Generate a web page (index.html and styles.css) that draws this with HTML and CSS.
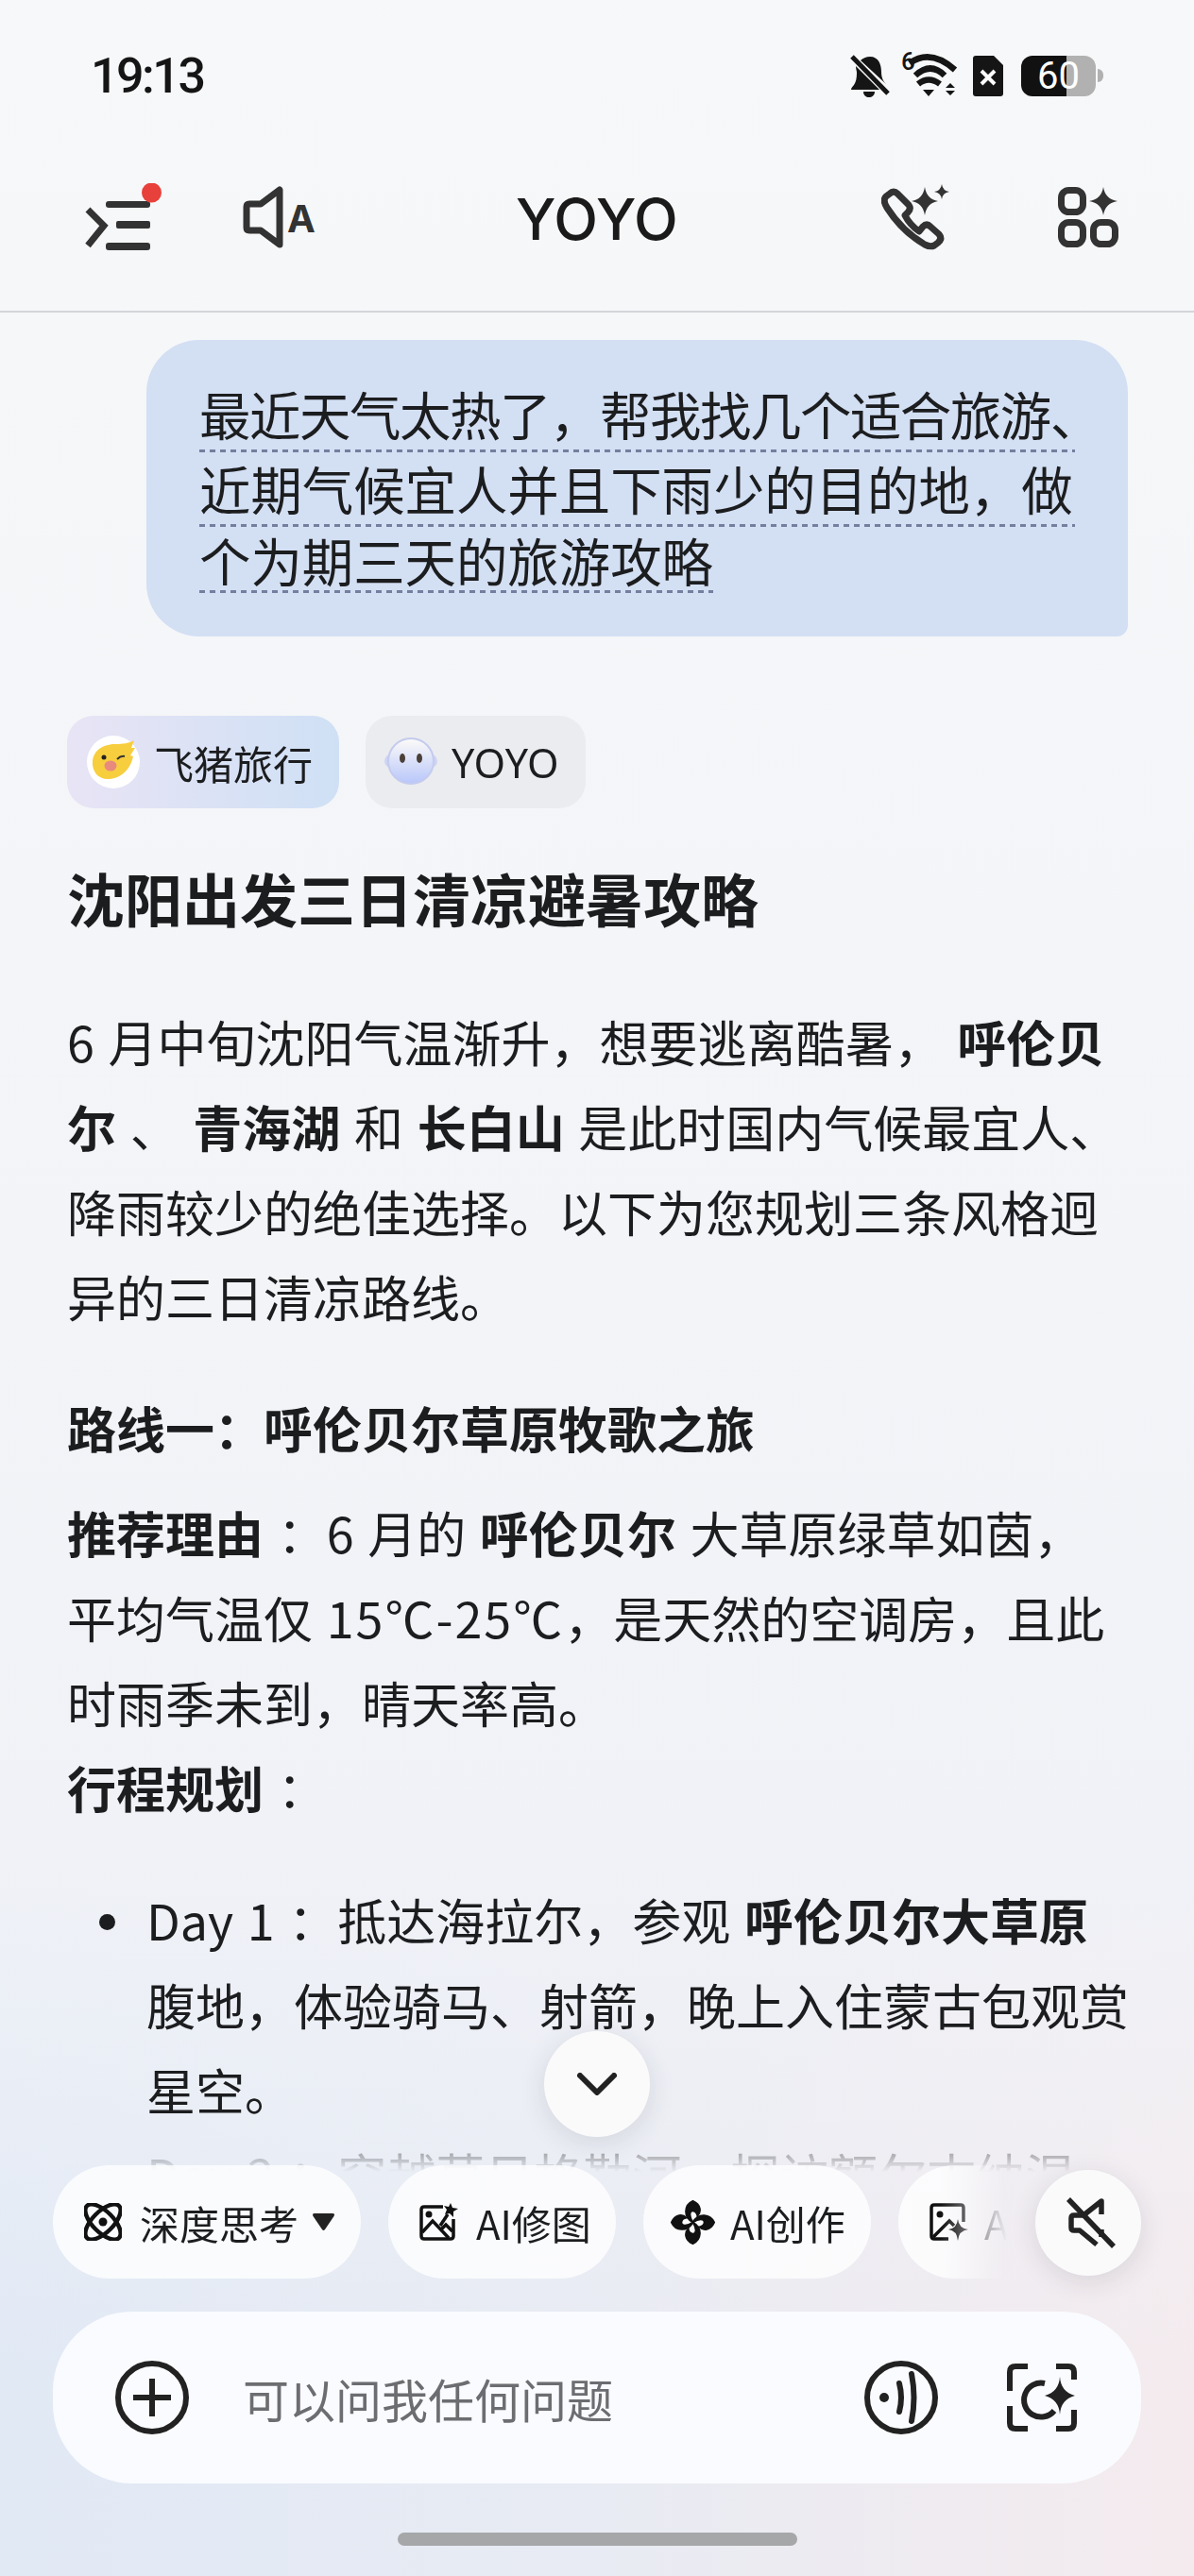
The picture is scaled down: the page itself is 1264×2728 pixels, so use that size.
FILE: index.html
```html
<!DOCTYPE html>
<html lang="zh-CN">

<head>
    <meta charset="utf-8">
    <title>YOYO</title>
    <link rel="stylesheet" href="styles.css">
</head>

<body>
    <div class="screen">

        <header class="top">
            <div class="status">
                <span class="time">19:13</span>
                <div class="status-icons">
                    <svg class="st-bell" width="44" height="46" viewBox="0 0 44 46">
                        <path d="M22 3 C31 3 34 11 34 19 C34 25 36 29 39 32 L12 7 C14 5 18 3 22 3Z M7 13 L32 38 H2 C2 36 4 34 5 33 C7 30 8 26 8 20 C8 18 7 16 7 13Z M15 40 H27 C27 44 24 46 21 46 C18 46 15 44 15 40Z" fill="#151515"/>
                        <path d="M3 3 L41 42" stroke="#151515" stroke-width="5"/>
                    </svg>
                    <svg class="st-wifi" width="60" height="54" viewBox="0 -6 60 54">
                        <text x="0" y="18" class="wifi-six">6</text>
                        <path d="M9 11 Q31 -5 57 18 M15 24 Q31 9 46 24 M18 33 Q29 24 41 33" fill="none" stroke="#151515" stroke-width="6.500"/>
                        <path d="M23 39 H35 L29 46Z M47 37 L52 32 L57 37Z M47 40 H57 L52 45Z" fill="#151515"/>
                    </svg>
                    <svg class="st-sim" width="32" height="43" viewBox="0 0 32 43">
                        <path d="M3 0 H22 L32 10 V40 Q32 43 29 43 H3 Q0 43 0 40 V3 Q0 0 3 0Z" fill="#151515"/>
                        <path d="M9 16 L23 30 M23 16 L9 30" stroke="#fff" stroke-width="4"/>
                    </svg>
                    <div class="battery">60</div>
                </div>
            </div>
            <nav class="nav">
                <div class="nav-left">
                    <svg width="82" height="72" viewBox="0 0 82 72">
                        <rect x="22" y="19" width="47" height="7" rx="3" fill="#333"/>
                        <rect x="33" y="40" width="36" height="8" rx="2" fill="#333"/>
                        <rect x="22" y="63" width="47" height="8" rx="3" fill="#333"/>
                        <path d="M3 28 L20 45 L3 66" fill="none" stroke="#333" stroke-width="7"/>
                        <circle cx="70.5" cy="10" r="10.5" fill="#e8403a"/>
                    </svg>
                    <svg width="80" height="66" viewBox="0 0 80 66">
                        <path d="M7 19 H19 L39 4 V62 L19 47 H7 Q4 47 4 44 V22 Q4 19 7 19Z" fill="none" stroke="#333" stroke-width="7" stroke-linejoin="round"/>
                        <text x="47" y="49" class="speaker-a">A</text>
                    </svg>
                </div>
                <div class="nav-title">YOYO</div>
                <div class="nav-right">
                    <svg width="74" height="70" viewBox="0 0 74 70">
                        <path d="M9 10 Q13 6 17 10 L29 22 Q32 26 28 30 L25 33 Q30 43 40 50 L44 45 Q48 41 52 45 L61 53 Q65 58 60 62 L56 65 Q52 67 46 64 Q22 50 6 25 Q1 17 5 13Z" fill="none" stroke="#333" stroke-width="7" stroke-linejoin="round"/>
                        <path d="M46 3 Q48 16 60 18 Q48 20 46 33 Q44 20 32 18 Q44 16 46 3Z M64 0 Q65 7 72 8 Q65 9 64 16 Q63 9 56 8 Q63 7 64 0Z" fill="#333"/>
                    </svg>
                    <svg width="64" height="64" viewBox="0 0 64 64">
                        <g fill="none" stroke="#333" stroke-width="7">
                            <rect x="3.500" y="3.500" width="23" height="23" rx="8"/>
                            <rect x="3.500" y="37.500" width="23" height="23" rx="8"/>
                            <rect x="37.500" y="37.500" width="23" height="23" rx="8"/>
                        </g>
                        <path d="M48 0 Q50 13 63 15 Q50 17 48 30 Q46 17 33 15 Q46 13 48 0Z" fill="#333"/>
                    </svg>
                </div>
            </nav>
        </header>

        <main class="chat">
            <div class="bubble">
                <span class="asked asked-first">最近天气太热了&#xFF0C;帮我找几个适合旅游、</span>
                <span class="asked">近期气候宜人并且下雨少的目的地&#xFF0C;做</span>
                <span class="asked asked-last">个为期三天的旅游攻略</span>
            </div>

            <div class="tags">
                <div class="tag tag-trip">
                    <svg width="56" height="56" viewBox="0 0 56 56">
                        <circle cx="28" cy="28" r="28" fill="#fff"/>
                        <path d="M6 27 C7 15 18 9 30 9 C38 9 45 8 50 5 L47 13 L51 13 L46 21 L49 22 C46 36 36 46 22 46 C12 46 5 38 6 27Z" fill="#f7ce3e"/>
                        <circle cx="18" cy="23" r="2.5" fill="#222"/>
                        <path d="M32 25 Q36 21 40 22" fill="none" stroke="#333" stroke-width="2"/>
                        <ellipse cx="25" cy="32" rx="6.5" ry="5.5" fill="#e98a7f"/>
                    </svg>
                    <span>飞猪旅行</span>
                </div>
                <div class="tag tag-yoyo">
                    <svg width="56" height="56" viewBox="0 0 56 56">
                        <defs>
                            <linearGradient id="yoyoFace" x1="0" y1="0" x2="0" y2="1">
                                <stop offset="0" stop-color="#fdfbf8"/>
                                <stop offset="1" stop-color="#b8c6fa"/>
                            </linearGradient>
                        </defs>
                        <ellipse cx="28" cy="27" rx="28" ry="13" fill="#cdd4f5"/>
                        <circle cx="28" cy="27" r="24" fill="url(#yoyoFace)" stroke="#c4cbee" stroke-width="2"/>
                        <ellipse cx="19" cy="24" rx="3" ry="5" fill="#4a4038"/>
                        <ellipse cx="37" cy="24" rx="3" ry="5" fill="#4a4038"/>
                    </svg>
                    <span>YOYO</span>
                </div>
            </div>

            <h1>沈阳出发三日清凉避暑攻略</h1>

            <p class="intro">6 月中旬沈阳气温渐升&#xFF0C;想要逃离酷暑&#xFF0C; <b>呼伦贝</b><br><b>尔</b> 、 <b>青海湖</b> 和 <b>长白山</b> 是此时国内气候最宜人、<br>降雨较少的绝佳选择。以下为您规划三条风格迥<br>异的三日清凉路线。</p>

            <h3>路线一&#xFF1A;呼伦贝尔草原牧歌之旅</h3>

            <p class="route"><b>推荐理由</b> &#xFF1A;6 月的 <b>呼伦贝尔</b> 大草原绿草如茵&#xFF0C;<br>平均气温仅 <span class="temp">15℃-25℃</span>&#xFF0C;是天然的空调房&#xFF0C;且此<br>时雨季未到&#xFF0C;晴天率高。<br><b>行程规划</b> &#xFF1A;</p>

            <ul>
                <li>Day 1 &#xFF1A;抵达海拉尔&#xFF0C;参观 <b>呼伦贝尔大草原</b><br>腹地&#xFF0C;体验骑马、射箭&#xFF0C;晚上入住蒙古包观赏<br>星空。</li>
                <li>Day 2 &#xFF1A;穿越莫日格勒河&#xFF0C;探访额尔古纳湿地。</li>
            </ul>
        </main>

        <button class="round round-down">
            <svg width="42" height="24" viewBox="0 0 42 24">
                <path d="M3 3 L21 21 L39 3" fill="none" stroke="#222" stroke-width="6" stroke-linecap="round" stroke-linejoin="round"/>
            </svg>
        </button>

        <footer class="dock">
            <div class="chips">
                <div class="chip chip-think">
                    <svg width="40" height="40" viewBox="0 0 40 40">
                        <g fill="none" stroke="#111" stroke-width="4.500">
                            <ellipse cx="20" cy="20" rx="24" ry="11" transform="rotate(45 20 20)"/>
                            <ellipse cx="20" cy="20" rx="24" ry="11" transform="rotate(-45 20 20)"/>
                        </g>
                        <circle cx="20" cy="20" r="4.5" fill="#111"/>
                    </svg>
                    <span>深度思考</span>
                    <svg class="caret" width="25" height="20" viewBox="0 0 25 20">
                        <path d="M3 1 H22 Q25 1 23.500 4 L14 18 Q12.500 20 11 18 L1.500 4 Q0 1 3 1Z" fill="#222"/>
                    </svg>
                </div>
                <div class="chip chip-retouch">
                    <svg width="41" height="40" viewBox="0 0 41 40">
                        <path d="M25 4 H5 Q2 4 2 7 V35 Q2 38 5 38 H33 Q36 38 36 35 V17" fill="none" stroke="#111" stroke-width="3.500"/>
                        <path d="M3 31 L14 19 L31 37 M23 28 L28 23 L35 30" fill="none" stroke="#111" stroke-width="3.500"/>
                        <circle cx="10" cy="12" r="3.500" fill="#111"/>
                        <path d="M22 24 L30 12" stroke="#111" stroke-width="3.500"/>
                        <path d="M33 0 L35 5 L41 6 L36 9 L36 15 L32 11 L27 12 L29 7 L26 3 L31 4Z" fill="#111"/>
                    </svg>
                    <span>AI修图</span>
                </div>
                <div class="chip chip-create">
                    <svg width="47" height="47" viewBox="0 0 48 48">
                        <g fill="#111" stroke="#111" stroke-width="2">
                            <path d="M24 24 C13 18 15 5 24 1 C33 5 33 13 29 17 C28 11 22 10 21 14 C20 18 22 21 24 24Z"/>
                            <path d="M24 24 C13 18 15 5 24 1 C33 5 33 13 29 17 C28 11 22 10 21 14 C20 18 22 21 24 24Z" transform="rotate(90 24 24)"/>
                            <path d="M24 24 C13 18 15 5 24 1 C33 5 33 13 29 17 C28 11 22 10 21 14 C20 18 22 21 24 24Z" transform="rotate(180 24 24)"/>
                            <path d="M24 24 C13 18 15 5 24 1 C33 5 33 13 29 17 C28 11 22 10 21 14 C20 18 22 21 24 24Z" transform="rotate(270 24 24)"/>
                        </g>
                    </svg>
                    <span>AI创作</span>
                </div>
                <div class="chip chip-image">
                    <svg width="42" height="40" viewBox="0 0 42 40">
                        <path d="M20 38 H5 Q2 38 2 35 V5 Q2 2 5 2 H33 Q36 2 36 5 V20" fill="none" stroke="#111" stroke-width="3.500"/>
                        <circle cx="11" cy="12" r="3.500" fill="#111"/>
                        <path d="M4 36 L21 19 L26 24" fill="none" stroke="#111" stroke-width="3.500"/>
                        <path d="M30 17 Q31 27 41 28 Q31 29 30 40 Q29 29 20 28 Q29 27 30 17Z" fill="#111"/>
                    </svg>
                    <span>AI生图</span>
                </div>
            </div>

            <div class="ask">
                <svg width="78" height="80" viewBox="0 0 78 80">
                    <circle cx="39" cy="40" r="36" fill="none" stroke="#222" stroke-width="6"/>
                    <path d="M19 40 H59 M39 20 V60" stroke="#222" stroke-width="6"/>
                </svg>
                <span class="ask-hint">可以问我任何问题</span>
                <svg class="ask-voice" width="78" height="80" viewBox="0 0 78 80">
                    <circle cx="39" cy="40" r="36" fill="none" stroke="#222" stroke-width="6"/>
                    <circle cx="21" cy="40" r="5" fill="#222"/>
                    <path d="M37 25 Q41 40 37 55 M50 15 Q55 40 50 65" fill="none" stroke="#222" stroke-width="6" stroke-linecap="round"/>
                </svg>
                <svg class="ask-lens" width="74" height="72" viewBox="0 0 74 72">
                    <path d="M22 3 H9 Q3 3 3 9 V29 M52 3 H65 Q71 3 71 9 V17 M3 45 V63 Q3 69 9 69 H22 M71 49 V63 Q71 69 65 69 H52" fill="none" stroke="#222" stroke-width="6"/>
                    <path d="M40 21 A18 18 0 1 0 50 50" fill="none" stroke="#222" stroke-width="6"/>
                    <path d="M56 14 Q57 30 72 34 Q57 38 56 54 Q55 38 40 34 Q55 30 56 14Z" fill="#222"/>
                </svg>
            </div>

            <div class="home-bar"></div>
        </footer>

        <button class="round round-mute">
            <svg width="52" height="54" viewBox="0 0 52 54">
                <path d="M37 18 V4 L18 19 H8 Q5 19 5 22 V32 Q5 35 8 35 H14 L32 50 M37 34 V42" fill="none" stroke="#222" stroke-width="5.500" stroke-linejoin="round"/>
                <path d="M2 2 L50 52" stroke="#222" stroke-width="5.500"/>
            </svg>
        </button>

    </div>
</body>

</html>
```

FILE: styles.css
```css
* {
    box-sizing: border-box;
}

body {
    margin: 0;
    font-family: "Noto Sans CJK SC", "Noto Sans", sans-serif;
    color: #1c1d1f;
}

.screen {
    position: relative;
    width: 1264px;
    height: 2728px;
    overflow: hidden;
    background:
        linear-gradient(180deg, #f7f8f9 0%, #f3f4f8 50%, #f0f2f7 72%, rgba(240, 242, 247, 0) 92%),
        linear-gradient(90deg, #e1e9f5 0%, #e8ebf3 50%, #f4ebee 100%);
}

/* top bars */

.top {
    border-bottom: 2px solid #d4d4da;
}

.status {
    display: flex;
    justify-content: space-between;
    align-items: center;
    height: 156px;
    padding: 4px 96px 0 96px;
}

.time {
    font-family: Roboto, sans-serif;
    font-size: 52px;
    font-weight: 500;
    letter-spacing: -2.500px;
    color: #151515;
}

.status-icons {
    display: flex;
    align-items: center;
    gap: 11px;
}

.st-wifi {
    margin-bottom: 6px;
}

.st-sim {
    margin-left: 5px;
}

.wifi-six {
    font-family: Roboto, sans-serif;
    font-size: 26px;
    font-weight: 500;
    fill: #151515;
}

.battery {
    position: relative;
    width: 79px;
    height: 43px;
    margin-left: 8px;
    margin-right: 8px;
    border-radius: 12px;
    background: linear-gradient(90deg, #111 61%, #b1b1b1 61%);
    color: #fff;
    font-family: Roboto, sans-serif;
    font-size: 40px;
    line-height: 43px;
    text-align: center;
}

.battery::after {
    content: "";
    position: absolute;
    top: 14px;
    right: -8px;
    width: 6px;
    height: 14px;
    border-radius: 0 6px 6px 0;
    background: #b1b1b1;
}

.nav {
    display: grid;
    grid-template-columns: 1fr auto 1fr;
    align-items: center;
    height: 173px;
    padding: 0 80px 26px;
}

.nav-left {
    display: flex;
    align-items: center;
    gap: 85px;
    padding-left: 10px;
}

.nav-right {
    display: flex;
    align-items: center;
    justify-content: flex-end;
    gap: 113px;
}

.speaker-a {
    font-family: Inter, sans-serif;
    font-size: 40px;
    font-weight: 700;
    fill: #333;
}

.nav-title {
    margin-top: 4px;
    font-family: Inter, sans-serif;
    font-size: 61px;
    font-weight: 500;
    color: #1a1a1a;
}

/* chat */

.chat {
    height: 2300px;
    margin-top: -1px;
    padding: 30px 66px 0 71px;
    overflow: hidden;
    word-spacing: 3px;
    -webkit-mask-image: linear-gradient(180deg, #000 0, #000 1910px, transparent 1970px);
    mask-image: linear-gradient(180deg, #000 0, #000 1910px, transparent 1970px);
}

.bubble {
    margin-left: 84px;
    margin-right: 4px;
    padding: 40px 56px 46px;
    border-radius: 56px 56px 12px 56px;
    background: #d3dff3;
    font-size: 54.400px;
}

.asked {
    display: block;
    height: 79px;
    line-height: 76px;
    padding-bottom: 3px;
    white-space: nowrap;
    background: repeating-linear-gradient(90deg, #747f9f 0, #747f9f 6px, transparent 6px, transparent 11px) left bottom / 100% 3px no-repeat;
}

.asked-first {
    letter-spacing: -1.400px;
}

.asked-last {
    width: fit-content;
    height: 70px;
    line-height: 70px;
}

.tags {
    display: flex;
    gap: 28px;
    margin-top: 84px;
}

.tag {
    display: flex;
    align-items: center;
    gap: 15px;
    height: 98px;
    padding: 0 28px 0 21px;
    border-radius: 28px;
    font-size: 42px;
}

.tag-trip {
    background: linear-gradient(90deg, #e8e4f5, #cfe0f5);
}

.tag-yoyo {
    padding: 0 28px 0 20px;
    background: #ebecef;
    font-family: "Noto Sans", sans-serif;
    font-size: 43px;
}

h1 {
    margin: 55px 0 0;
    font-size: 61px;
    font-weight: 700;
    line-height: 80px;
}

p {
    margin: 0;
    font-size: 52px;
    line-height: 90px;
}

.intro {
    margin-top: 67px;
}

h3 {
    margin: 49px 0 0;
    font-size: 52px;
    font-weight: 700;
    line-height: 90px;
}

.route {
    margin-top: 21px;
}

.temp {
    letter-spacing: 2px;
}

ul {
    margin: 50px 0 0;
    padding-left: 84px;
    list-style: none;
    font-size: 52px;
    line-height: 90px;
}

li {
    position: relative;
}

li::before {
    content: "";
    position: absolute;
    left: -50px;
    top: 39px;
    width: 17px;
    height: 17px;
    border-radius: 50%;
    background: #1c1d1f;
}

/* floating bits */

.round {
    position: absolute;
    display: flex;
    align-items: center;
    justify-content: center;
    width: 112px;
    height: 112px;
    padding: 0;
    border: none;
    border-radius: 50%;
    background: #fafafb;
    box-shadow: 0 6px 28px rgba(40, 40, 60, 0.12);
}

.round-down {
    left: 576px;
    top: 2151px;
}

.round-mute {
    left: 1096px;
    top: 2298px;
    padding-left: 5px;
}

.dock {
    position: absolute;
    left: 0;
    right: 0;
    bottom: 0;
    padding: 0 56px 32px;
}

.chips {
    display: flex;
    gap: 29px;
    overflow: hidden;
    -webkit-mask-image: linear-gradient(90deg, #000 0, #000 940px, transparent 1010px);
    mask-image: linear-gradient(90deg, #000 0, #000 940px, transparent 1010px);
}

.chip {
    display: flex;
    flex-shrink: 0;
    align-items: center;
    height: 120px;
    border-radius: 60px;
    background: rgba(255, 255, 255, 0.78);
    font-size: 42px;
    white-space: nowrap;
}

.chip-think {
    gap: 19px;
    width: 326px;
    padding-left: 33px;
}

.caret {
    margin-left: -5px;
}

.chip-retouch {
    gap: 19px;
    width: 241px;
    padding-left: 33px;
}

.chip-create {
    gap: 16px;
    width: 241px;
    padding-left: 29px;
}

.chip-image {
    gap: 16px;
    width: 241px;
    padding-left: 33px;
}

.ask {
    display: flex;
    align-items: center;
    height: 182px;
    margin-top: 35px;
    padding: 0 68px 0 66px;
    border-radius: 84px;
    background: #fafbfe;
}

.ask-hint {
    flex: 1;
    margin-left: 57px;
    font-size: 49px;
    color: #6c6d70;
}

.ask-lens {
    margin-left: 73px;
}

.home-bar {
    width: 423px;
    height: 14px;
    margin: 52px auto 0;
    border-radius: 7px;
    background: #a6a7a9;
}
```
